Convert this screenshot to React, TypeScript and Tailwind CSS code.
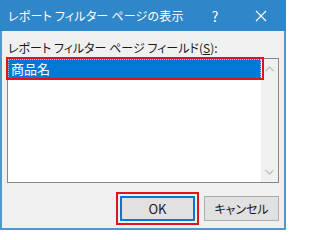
import React from "react";

const jp = { fontFamily: '"Noto Sans CJK JP", "Noto Sans", sans-serif' };

export default function App() {
  return (
    <div
      className="w-[286px] h-[230px] flex flex-col bg-[#f0f0f0] border-x-2 border-b-2 border-[#4f98c9] border-t-0 [font-feature-settings:'palt'] text-[12px] leading-[14px]"
      style={jp}
    >
      {/* Title bar */}
      <div className="h-[31px] -mx-[2px] flex items-center bg-[#2f86c8] text-white shrink-0">
        <div className="pl-[8px] flex-1 text-[12px] tracking-[0.2px]">レポート フィルター ページの表示</div>
        <div className="w-[46px] flex justify-center text-[14px] mr-[0px]">?</div>
        <div className="w-[46px] flex justify-center mr-[2px]">
          <svg width="12" height="12" viewBox="0 0 12 12">
            <path d="M1 1 L11 11 M11 1 L1 11" stroke="white" strokeWidth="1.1" />
          </svg>
        </div>
      </div>

      {/* Content */}
      <div className="flex-1 flex flex-col px-[5px] pt-[10px] pb-[8px]">
        <div className="pl-[1px] text-[12px] leading-[14px] text-[#1a1a1a]">
          レポート フィルター ページ フィールド(<span className="underline">S</span>):
        </div>
        <div className="relative mt-[3px] h-[125px] border border-[#828790] bg-white flex">
          <div className="flex-1 pt-[0px]">
            <div className="h-[20px] bg-[#0078d7] border border-dotted border-[#9cc8ee] flex items-center pl-[2px] text-white text-[13px]">
              商品名
            </div>
          </div>
          <div className="w-[17px] bg-[#f0f0f0] flex flex-col justify-between items-center py-[7px]">
            <svg width="9" height="6" viewBox="0 0 9 6">
              <path d="M0.5 5 L4.5 1 L8.5 5" stroke="#c3c3c3" strokeWidth="1.4" fill="none" />
            </svg>
            <svg width="9" height="6" viewBox="0 0 9 6">
              <path d="M0.5 1 L4.5 5 L8.5 1" stroke="#c3c3c3" strokeWidth="1.4" fill="none" />
            </svg>
          </div>
          <div className="absolute left-[-2px] top-[-2px] w-[258px] h-[23px] border-2 border-[#e0141e] pointer-events-none" />
        </div>
        <div className="mt-[13px] flex justify-end gap-[9px]">
          <div className="relative">
            <button className="w-[75px] h-[25px] bg-[#e1e1e1] border-2 border-[#0078d7] text-[13px] text-[#1a1a1a] flex items-center justify-center">
              OK
            </button>
            <div className="absolute left-[-4px] top-[-4px] w-[83px] h-[33px] border-2 border-[#e0141e] pointer-events-none" />
          </div>
          <button className="w-[75px] h-[25px] bg-[#e1e1e1] border border-[#adadad] text-[12px] text-[#1a1a1a] flex items-center justify-center">
            キャンセル
          </button>
        </div>
      </div>
    </div>
  );
}
